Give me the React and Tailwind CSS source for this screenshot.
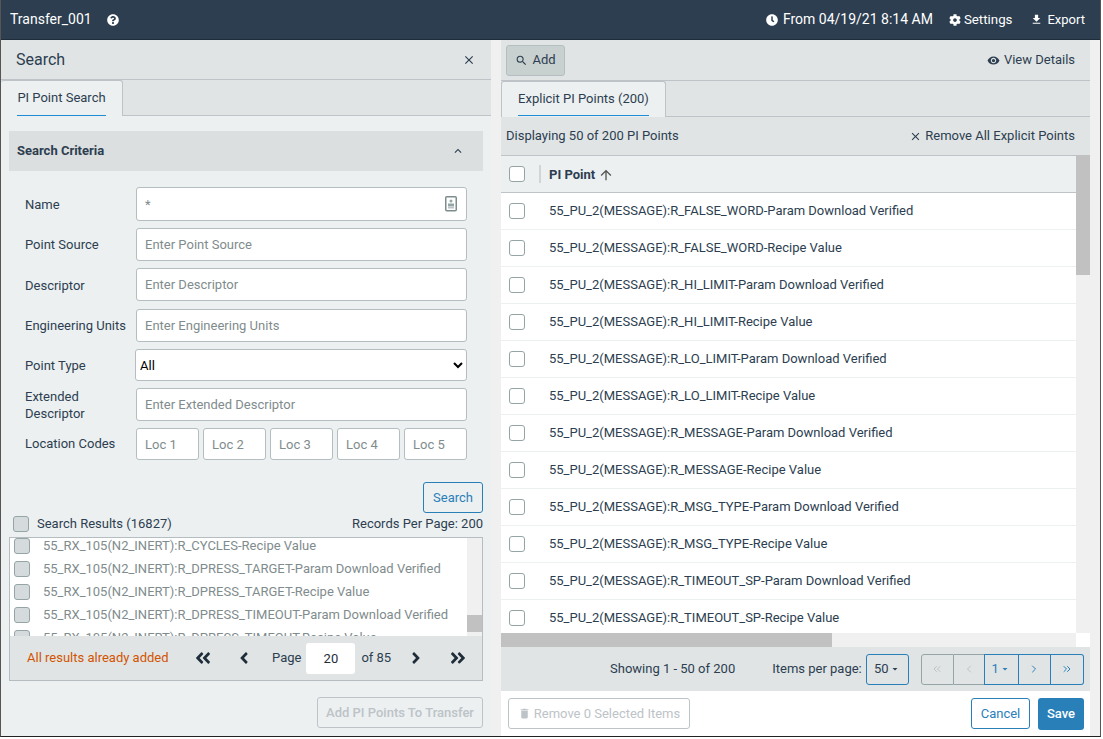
import React from "react";
import {
  FaAngleDoubleLeft,
  FaAngleDoubleRight,
  FaAngleLeft,
  FaAngleRight,
  FaClock,
  FaCog,
  FaQuestionCircle,
} from "react-icons/fa";
import {
  MdArrowDropDown,
  MdArrowUpward,
  MdClose,
  MdDelete,
  MdExpandLess,
  MdFileDownload,
  MdSearch,
  MdVisibility,
} from "react-icons/md";
import { ChevronLeft, ChevronRight, ChevronsLeft, ChevronsRight } from "lucide-react";

const results = [
  "55_RX_105(N2_INERT):R_CYCLES-Recipe Value",
  "55_RX_105(N2_INERT):R_DPRESS_TARGET-Param Download Verified",
  "55_RX_105(N2_INERT):R_DPRESS_TARGET-Recipe Value",
  "55_RX_105(N2_INERT):R_DPRESS_TIMEOUT-Param Download Verified",
  "55_RX_105(N2_INERT):R_DPRESS_TIMEOUT-Recipe Value",
];

const points = [
  "R_FALSE_WORD-Param Download Verified",
  "R_FALSE_WORD-Recipe Value",
  "R_HI_LIMIT-Param Download Verified",
  "R_HI_LIMIT-Recipe Value",
  "R_LO_LIMIT-Param Download Verified",
  "R_LO_LIMIT-Recipe Value",
  "R_MESSAGE-Param Download Verified",
  "R_MESSAGE-Recipe Value",
  "R_MSG_TYPE-Param Download Verified",
  "R_MSG_TYPE-Recipe Value",
  "R_TIMEOUT_SP-Param Download Verified",
  "R_TIMEOUT_SP-Recipe Value",
];

const Field = ({ label, placeholder, className = "", labelClass = "" }) => (
  <div className={`flex items-center h-[33px] ${className}`}>
    <label className={`w-[111px] shrink-0 text-[13px] leading-[17px] text-[#2c3e50] ${labelClass}`}>{label}</label>
    <input
      type="text"
      placeholder={placeholder}
      className="w-[331px] h-[33px] px-[8px] bg-white border border-[#b4bec0] rounded-[3px] text-[13px] placeholder:text-[#7f8c8d]"
    />
  </div>
);

const Box = ({ className = "" }) => (
  <span className={`block shrink-0 w-4 h-4 rounded-[3px] border border-[#95a5a6] ${className}`} />
);

const App = () => {
  return (
    <div
      className="w-[1101px] h-[737px] flex flex-col border-l border-r border-b border-[#555] border-b-[#222] bg-[#f0f0f0] overflow-hidden"
      style={{ fontFamily: "Roboto, sans-serif" }}
    >
      {/* Header */}
      <header className="h-[40px] shrink-0 bg-[#2c3e50] text-white flex items-center pl-[9px] pr-[15px] text-[13px] border-b border-[#1f2d3a]">
        <span className="text-[14px]">Transfer_001</span>
        <FaQuestionCircle size={12} className="ml-[15px]" />
        <div className="ml-auto flex items-center">
          <FaClock size={12} />
          <span className="ml-[5px] text-[14px]">From 04/19/21 8:14 AM</span>
          <FaCog size={12} className="ml-[16px]" />
          <span className="ml-[3px] text-[13.3px]">Settings</span>
          <MdFileDownload size={13} className="ml-[18px]" />
          <span className="ml-[4px]">Export</span>
        </div>
      </header>

      <div className="flex flex-1 min-h-0">
        {/* Left panel */}
        <section className="w-[490px] shrink-0 flex flex-col bg-[#ecf0f1]">
          <div className="h-[40px] shrink-0 bg-[#e0e4e5] border-b border-[#bdc3c7] flex items-center justify-between pl-[15px] pr-[15px] text-[#2c3e50]">
            <span className="text-[16px]">Search</span>
            <MdClose size={14} />
          </div>
          <div className="h-[36px] shrink-0 bg-[#e0e4e5] border-b border-[#bdc3c7] flex">
            <div className="w-[122px] h-[36px] bg-[#ecf0f1] border-r border-t border-[#bdc3c7] rounded-tl-[3px] rounded-tr-[3px] px-[16px]">
              <div className="h-[35px] flex items-center justify-center border-b border-[#1f8dd6] text-[13px] text-[#2c3e50]">
                PI Point Search
              </div>
            </div>
          </div>

          <div className="flex-1 min-h-0 px-[8px] pt-[15px]">
            <div className="h-[40px] bg-[#dcdfe0] flex items-center justify-between pl-[8px] pr-[18px] text-[13px] font-bold text-[#2c3e50]">
              Search Criteria
              <MdExpandLess size={14} />
            </div>

            <div className="pl-[16px] pt-[16px]">
              <div className="flex items-center h-[34px]">
                <label className="w-[111px] shrink-0 mt-[2px] text-[13px] text-[#2c3e50]">Name</label>
                <div className="relative w-[331px]">
                  <input
                    type="text"
                    value="*"
                    readOnly
                    className="w-full h-[34px] px-[8px] bg-white border border-[#b4bec0] rounded-[3px] text-[13px] text-[#7f8c8d]"
                  />
                  <svg viewBox="0 0 12 16" className="absolute right-[10px] top-[9px] w-3 h-4" fill="none">
                    <rect x="0.75" y="0.75" width="10.5" height="14" rx="1" stroke="#7f8c8d" strokeWidth="1.5" />
                    <circle cx="6" cy="5" r="1.5" fill="#95a5a6" />
                    <rect x="3" y="7.5" width="6" height="3" fill="#95a5a6" />
                    <rect x="3" y="11" width="6" height="1.5" fill="#bdc3c7" />
                  </svg>
                </div>
              </div>
              <Field label="Point Source" placeholder="Enter Point Source" className="mt-[7px]" />
              <Field label="Descriptor" placeholder="Enter Descriptor" className="mt-[7px]" labelClass="mt-[2px]" />
              <Field label="Engineering Units" placeholder="Enter Engineering Units" className="mt-[8px]" />
              <div className="flex items-center h-[32px] mt-[7px]">
                <label className="w-[110px] shrink-0 mt-[2px] text-[13px] text-[#2c3e50]">Point Type</label>
                <select className="w-[332px] h-[32px] bg-white border border-[#b4bec0] rounded-[3px] text-[13px] text-black">
                  <option>All</option>
                </select>
              </div>
              <Field label="Extended Descriptor" placeholder="Enter Extended Descriptor" className="mt-[7px]" />
              <div className="flex items-center h-[32px] mt-[7px]">
                <label className="w-[111px] shrink-0 text-[13px] text-[#2c3e50]">Location Codes</label>
                <div className="w-[331px] grid grid-cols-5 gap-[4px]">
                  {["Loc 1", "Loc 2", "Loc 3", "Loc 4", "Loc 5"].map((loc) => (
                    <input
                      key={loc}
                      type="text"
                      placeholder={loc}
                      className="w-full h-[32px] px-[8px] bg-white border border-[#b4bec0] rounded-[3px] text-[13px] placeholder:text-[#7f8c8d]"
                    />
                  ))}
                </div>
              </div>
            </div>

            <div className="flex justify-end mt-[22px]">
              <button className="w-[60px] h-[31px] border border-[#2980b9] rounded-[3px] text-[13px] text-[#2980b9]">
                Search
              </button>
            </div>

            <div className="flex items-center justify-between h-[20px] mt-[1px] pl-[4px] text-[13px] text-[#2c3e50]">
              <span className="flex items-center">
                <Box className="bg-[#d5dbdd]" />
                <span className="ml-[8px]">Search Results (16827)</span>
              </span>
              <span>Records Per Page: 200</span>
            </div>

            <div className="mt-[3px] h-[144px] border border-[#b4bec0] flex flex-col">
              <div className="relative h-[98px] shrink-0 bg-white overflow-hidden">
                <div className="-mt-[4px] pl-[4px] pr-[15px]">
                  {results.map((r) => (
                    <div key={r} className="h-[23px] flex items-center text-[13px] text-[#7f8c8d]">
                      <Box className="bg-[#d5dbdd]" />
                      <span className="ml-[13px] whitespace-nowrap">{r}</span>
                    </div>
                  ))}
                </div>
                <div className="absolute right-0 top-0 bottom-0 w-[15px] bg-[#f0f0f0]">
                  <div className="mt-[77px] h-[17px] bg-[#c1c1c1]" />
                </div>
              </div>
              <div className="flex-1 bg-[#e0e4e5] flex items-center pl-[17px] text-[13px] text-[#2c3e50] whitespace-nowrap">
                <span className="text-[#d35400] w-[150px] shrink-0">All results already added</span>
                <FaAngleDoubleLeft size={18} className="ml-[17px] shrink-0 text-[#1f2d3a]" />
                <FaAngleLeft size={18} className="ml-[23px] shrink-0 text-[#1f2d3a]" />
                <span className="ml-[19px] shrink-0">Page</span>
                <input
                  type="text"
                  value="20"
                  readOnly
                  className="ml-[5px] w-[49px] h-[31px] shrink-0 bg-white rounded-[3px] text-center text-[13px] text-[#1f2d3a]"
                />
                <span className="ml-[6px] shrink-0">of 85</span>
                <FaAngleRight size={18} className="ml-[16px] shrink-0 text-[#1f2d3a]" />
                <FaAngleDoubleRight size={18} className="ml-[24px] shrink-0 text-[#1f2d3a]" />
              </div>
            </div>

            <div className="flex justify-end mt-[16px]">
              <button className="w-[166px] h-[31px] border border-[#bdc3c7] rounded-[3px] text-[13px] font-medium text-[#bdc3c7]">
                Add PI Points To Transfer
              </button>
            </div>
          </div>
        </section>

        {/* Gutter */}
        <div className="w-[10px] shrink-0" />

        {/* Right panel */}
        <section className="w-[589px] shrink-0 flex flex-col bg-white">
          <div className="h-[41px] shrink-0 bg-[#e0e4e5] border-b border-[#bdc3c7] flex items-center justify-between pl-[5px] pr-[15px] text-[13px] text-[#2c3e50]">
            <button className="w-[59px] h-[31px] bg-[#c9d0d0] border border-[#b4bec0] rounded-[3px] flex items-center justify-center gap-[4px]">
              <MdSearch size={13} />
              Add
            </button>
            <span className="flex items-center gap-[4px]">
              <MdVisibility size={13} />
              View Details
            </span>
          </div>
          <div className="h-[36px] shrink-0 bg-[#e0e4e5] border-b border-[#bdc3c7] flex">
            <div className="w-[165px] h-[36px] bg-[#ecf0f1] border-r border-t border-l border-[#bdc3c7] rounded-tl-[3px] rounded-tr-[3px] px-[16px]">
              <div className="h-[34px] flex items-center justify-center border-b border-[#1f8dd6] text-[13px] text-[#2c3e50]">
                Explicit PI Points (200)
              </div>
            </div>
          </div>
          <div className="h-[38px] shrink-0 bg-[#e0e4e5] flex items-center justify-between pl-[5px] pr-[15px] text-[13px] text-[#2c3e50]">
            <span>Displaying 50 of 200 PI Points</span>
            <span className="flex items-center gap-[3px]">
              <MdClose size={13} />
              Remove All Explicit Points
            </span>
          </div>

          {/* Table */}
          <div className="h-[492px] shrink-0 flex flex-col">
            <div className="flex h-[478px]">
              <div className="w-[575px] shrink-0 overflow-hidden">
                <div className="h-[38px] bg-[#ecf0f1] border-b border-t border-[#bdc3c7] flex items-center pl-[8px] text-[13px] font-bold text-[#2c3e50]">
                  <Box className="bg-white" />
                  <span className="ml-[14px] w-[2px] h-[18px] bg-[#d0d6d8]" />
                  <span className="ml-[8px] mt-[2px]">PI Point</span>
                  <MdArrowUpward size={16} className="ml-[3px] mt-[2px] text-[#555]" />
                </div>
                {points.map((p) => (
                  <div
                    key={p}
                    className="h-[37px] bg-white border-b border-[#ecf0f1] flex items-center pl-[8px] text-[13px] text-[#2c3e50]"
                  >
                    <Box className="bg-white" />
                    <span className="ml-[24px] whitespace-nowrap">55_PU_2(MESSAGE):{p}</span>
                  </div>
                ))}
              </div>
              <div className="w-[14px] shrink-0 bg-[#f0f0f0]">
                <div className="h-[120px] bg-[#c1c1c1]" />
              </div>
            </div>
            <div className="flex h-[14px]">
              <div className="w-[575px] shrink-0 bg-[#f0f0f0]">
                <div className="w-[331px] h-full bg-[#c1c1c1]" />
              </div>
              <div className="flex-1 bg-white" />
            </div>
          </div>

          {/* Pagination */}
          <div className="h-[44px] shrink-0 bg-[#e0e4e5] flex items-center pl-[109px] text-[13px] text-[#2c3e50]">
            <span>Showing 1 - 50 of 200</span>
            <span className="ml-[37px]">Items per page:</span>
            <button className="ml-[4px] w-[43px] h-[31px] border border-[#2980b9] rounded-[3px] flex items-center justify-center">
              50
              <MdArrowDropDown size={12} />
            </button>
            <div className="ml-[12px] flex h-[31px] text-[#2980b9]">
              <span className="w-[33px] border border-[#95a5a6] rounded-l-[3px] flex items-center justify-center text-[#bdc3c7]">
                <ChevronsLeft size={12} />
              </span>
              <span className="w-[31px] border-y border-r border-[#95a5a6] flex items-center justify-center text-[#bdc3c7]">
                <ChevronLeft size={12} />
              </span>
              <span className="w-[35px] border border-[#2980b9] -ml-px flex items-center justify-center">
                1
                <MdArrowDropDown size={12} />
              </span>
              <span className="w-[32px] border-y border-r border-[#2980b9] flex items-center justify-center">
                <ChevronRight size={12} />
              </span>
              <span className="w-[33px] border-y border-r border-[#2980b9] rounded-r-[3px] flex items-center justify-center">
                <ChevronsRight size={12} />
              </span>
            </div>
          </div>

          {/* Actions */}
          <div className="flex-1 bg-white flex items-center pl-[7px] pr-[6px] text-[13px]">
            <button className="w-[182px] h-[31px] border border-[#bdc3c7] rounded-[3px] flex items-center justify-center gap-[3px] text-[#bdc3c7]">
              <MdDelete size={13} />
              Remove 0 Selected Items
            </button>
            <button className="ml-auto w-[59px] h-[31px] border border-[#2980b9] rounded-[3px] text-[#2980b9]">
              Cancel
            </button>
            <button className="ml-[8px] w-[46px] h-[32px] bg-[#2980b9] rounded-[3px] text-white font-medium">
              Save
            </button>
          </div>
        </section>
      </div>
    </div>
  );
};

export default App;
